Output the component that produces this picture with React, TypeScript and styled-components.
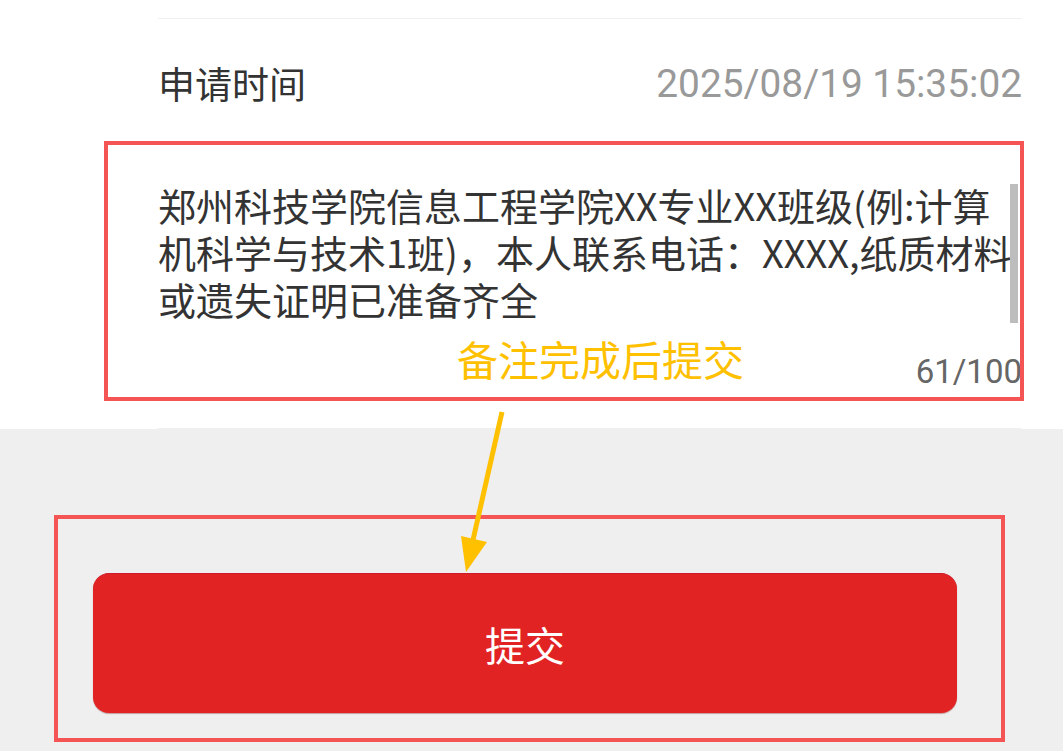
import React, { FC } from 'react'
import styled, { createGlobalStyle } from 'styled-components'

const GlobalStyle = createGlobalStyle`
  html, body {
    margin: 0;
    padding: 0;
    background: #efefef;
  }
  body {
    font-family: Roboto, "Noto Sans CJK SC", sans-serif;
  }
`

const Screen = styled.div`
  position: relative;
  width: 1063px;
  height: 751px;
  overflow: hidden;
  background: #efefef;
  display: flex;
  flex-direction: column;
`

const Panel = styled.div`
  background: #fff;
  padding: 18px 41px 0 158px;
`

const InfoRow = styled.div`
  display: flex;
  align-items: center;
  justify-content: space-between;
  height: 128px;
  border-top: 1px solid #f0f0f0;
`

const Label = styled.span`
  font-family: "Noto Sans CJK SC", sans-serif;
  font-size: 37px;
  color: #333;
`

const Value = styled.span`
  font-family: Roboto, "Noto Sans CJK SC", sans-serif;
  font-size: 38.8px;
  color: #999;
`

const RemarkBox = styled.div`
  position: relative;
  height: 282px;
  padding-top: 34px;
  box-sizing: border-box;
  border-bottom: 1px solid #f0f0f0;
`

const RemarkText = styled.div`
  width: 860px;
  height: 141px;
  font-family: "Noto Sans CJK SC", sans-serif;
  font-size: 38px;
  line-height: 47px;
  color: #333;
  word-break: break-all;
`

const ScrollThumb = styled.div`
  position: absolute;
  right: 4px;
  top: 37px;
  width: 8px;
  height: 139px;
  background: #bdbdbd;
`

const Counter = styled.div`
  margin-top: 30px;
  text-align: right;
  font-family: Roboto, sans-serif;
  font-size: 33px;
  color: #666;
`

const Footer = styled.div`
  flex: 1;
  padding: 144px 106px 0 93px;
`

const SubmitButton = styled.button`
  width: 100%;
  height: 140px;
  border: none;
  border-top: 1px solid #cc1a2a;
  border-radius: 16px;
  background: #e22323;
  box-shadow: 0 1px 1px rgba(120, 0, 0, 0.35);
  color: #fff;
  font-family: "Noto Sans CJK SC", sans-serif;
  font-size: 40px;
`

interface MarkProps {
  left: number
  top: number
  width: number
  height: number
}

const MarkBox = styled.div<MarkProps>`
  position: absolute;
  left: ${(p) => p.left}px;
  top: ${(p) => p.top}px;
  width: ${(p) => p.width}px;
  height: ${(p) => p.height}px;
  border: 4px solid #f55454;
  box-sizing: border-box;
  pointer-events: none;
`

const Hint = styled.div`
  position: absolute;
  left: 457px;
  top: 330px;
  font-family: "Noto Sans CJK SC", sans-serif;
  font-size: 41px;
  line-height: 56px;
  color: #ffc000;
`

const Arrow = styled.svg`
  position: absolute;
  left: 0;
  top: 0;
  pointer-events: none;
`

const App: FC = () => {
  return (
    <>
      <GlobalStyle />
      <Screen>
        <Panel>
          <InfoRow>
            <Label>申请时间</Label>
            <Value>2025/08/19 15:35:02</Value>
          </InfoRow>
          <RemarkBox>
            <RemarkText>
              郑州科技学院信息工程学院XX专业XX班级(例:计算机科学与技术1班)，本人联系电话：XXXX,纸质材料或遗失证明已准备齐全
            </RemarkText>
            <ScrollThumb />
            <Counter>61/100</Counter>
          </RemarkBox>
        </Panel>
        <Footer>
          <SubmitButton>提交</SubmitButton>
        </Footer>

        <MarkBox left={104} top={141} width={920} height={260} />
        <MarkBox left={54} top={515} width={951} height={227} />
        <Hint>备注完成后提交</Hint>
        <Arrow width={1063} height={751} viewBox="0 0 1063 751">
          <line x1={502} y1={412} x2={473} y2={540} stroke="#ffc000" strokeWidth={5} />
          <polygon points="461,536 487,542 466,572" fill="#ffc000" />
        </Arrow>
      </Screen>
    </>
  )
}

export default App
